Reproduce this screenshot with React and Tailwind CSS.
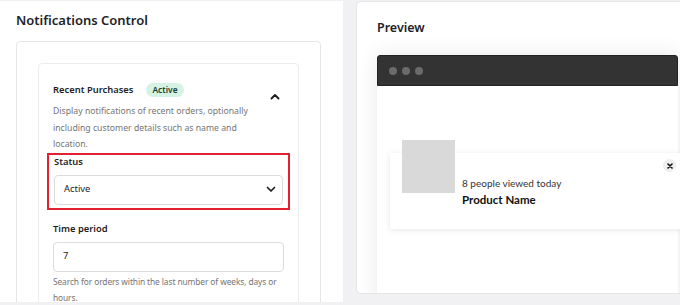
import React from "react";

function ChevronUp() {
  return (
    <svg width="10" height="7" viewBox="0 0 10 7" fill="none">
      <path d="M1.5 5.5L5 2L8.5 5.5" stroke="#1e1e1e" strokeWidth="1.9" strokeLinecap="round" strokeLinejoin="round" />
    </svg>
  );
}

function ChevronDown() {
  return (
    <svg width="10" height="7" viewBox="0 0 10 7" fill="none">
      <path d="M1.5 1.5L5 5L8.5 1.5" stroke="#1e1e1e" strokeWidth="1.7" strokeLinecap="round" strokeLinejoin="round" />
    </svg>
  );
}

export default function App() {
  return (
    <div className="w-[680px] h-[305px] bg-[#f1f1f3] flex gap-[13px] overflow-hidden font-['Noto_Sans',sans-serif] text-[#1e1e1e]">
      {/* Left panel */}
      <div className="w-[343px] shrink-0 h-[301px] mt-[1px] bg-white pl-[16px] pr-[22px] pt-[8px] overflow-hidden">
        <h2 className="text-[13px] leading-[22px] font-semibold text-[#1d2327]">Notifications Control</h2>
        <div className="mt-[10px] border border-[#e6e6e8] rounded-[4px] pt-[21px] px-[21px] h-[300px]">
          <div className="border border-[#ececee] rounded-[4px] px-[14px] pt-[17px] h-[300px]">
            <div className="flex items-start">
              <div className="w-[198px]">
                <div className="flex items-center gap-[13px] h-[18px]">
                  <span className="text-[9.4px] font-semibold text-[#1e1e1e]">Recent Purchases</span>
                  <span className="px-[6px] h-[14px] leading-[14px] rounded-full bg-[#d6f2e4] text-[#183f2e] text-[8.4px] font-semibold">Active</span>
                </div>
                <p className="mt-[4px] text-[8.7px] leading-[16.5px] text-[#757575]">
                  Display notifications of recent orders, optionally including customer details such as name and location.
                </p>
              </div>
              <div className="ml-auto mr-[4px] mt-[12px]">
                <ChevronUp />
              </div>
            </div>
            <div className="-mx-[6px] border-2 border-[#e3202f] px-[5px] pt-0 pb-[3px]">
              <div className="text-[9.4px] leading-[14px] font-semibold text-[#1e1e1e]">Status</div>
              <div className="mt-[6px] h-[30px] border border-[#dcdcde] rounded-[4px] flex items-center pl-[9px] pr-[6px]">
                <span className="text-[9.4px] text-[#1e1e1e]">Active</span>
                <span className="ml-auto flex"><ChevronDown /></span>
              </div>
            </div>
            <div className="mt-[12px] text-[9.4px] leading-[14px] font-semibold text-[#1e1e1e]">Time period</div>
            <div className="mt-[6px] h-[30px] border border-[#dcdcde] rounded-[4px] flex items-center pl-[9px]">
              <span className="text-[9.4px] text-[#1e1e1e]">7</span>
            </div>
            <p className="mt-[2px] -mr-[8px] text-[8.4px] tracking-[-0.1px] leading-[16px] text-[#757575]">
              Search for orders within the last number of weeks, days or hours.
            </p>
          </div>
        </div>
      </div>

      {/* Right panel */}
      <div className="w-[330px] shrink-0 h-[293px] mt-[1px] bg-white border border-[#e6e6e8] rounded-[5px] pl-[20px] pt-[15px] overflow-hidden">
        <h2 className="text-[12.5px] leading-[22px] font-semibold text-[#1d2327]">Preview</h2>
        <div className="mt-[16px] w-[301px] h-[300px] bg-white shadow-[0_0_22px_rgba(0,0,0,0.09)] rounded-t-[3px]">
          <div className="h-[31px] bg-[#333333] rounded-t-[3px] border border-[#222] flex items-center pl-[11px] gap-[5px]">
            <span className="w-[8px] h-[8px] rounded-full bg-[#6b6b6b]" />
            <span className="w-[8px] h-[8px] rounded-full bg-[#6b6b6b]" />
            <span className="w-[8px] h-[8px] rounded-full bg-[#6b6b6b]" />
          </div>
          <div className="pl-[13px] pt-[67px]">
            <div className="relative w-[292px] h-[76px] bg-white shadow-[0_1px_6px_rgba(0,0,0,0.1)] flex items-start pl-[12px]">
              <div className="w-[53px] h-[53px] bg-[#d9d9d9] -mt-[13px] shrink-0" />
              <div className="ml-[7px] mt-[22px]">
                <div className="text-[10px] leading-[16px] text-[#333] font-['Lato',sans-serif]">8 people viewed today</div>
                <div className="text-[11.5px] leading-[17px] font-bold text-[#111] font-['Lato',sans-serif]">Product Name</div>
              </div>
              <div className="absolute top-[6px] right-[6px] w-[13px] h-[13px] rounded-full bg-[#eeeeee] flex items-center justify-center">
                <svg width="6" height="6" viewBox="0 0 6 6">
                  <path d="M1 1L5 5M5 1L1 5" stroke="#111" strokeWidth="1.6" strokeLinecap="round" />
                </svg>
              </div>
            </div>
          </div>
        </div>
      </div>
    </div>
  );
}
